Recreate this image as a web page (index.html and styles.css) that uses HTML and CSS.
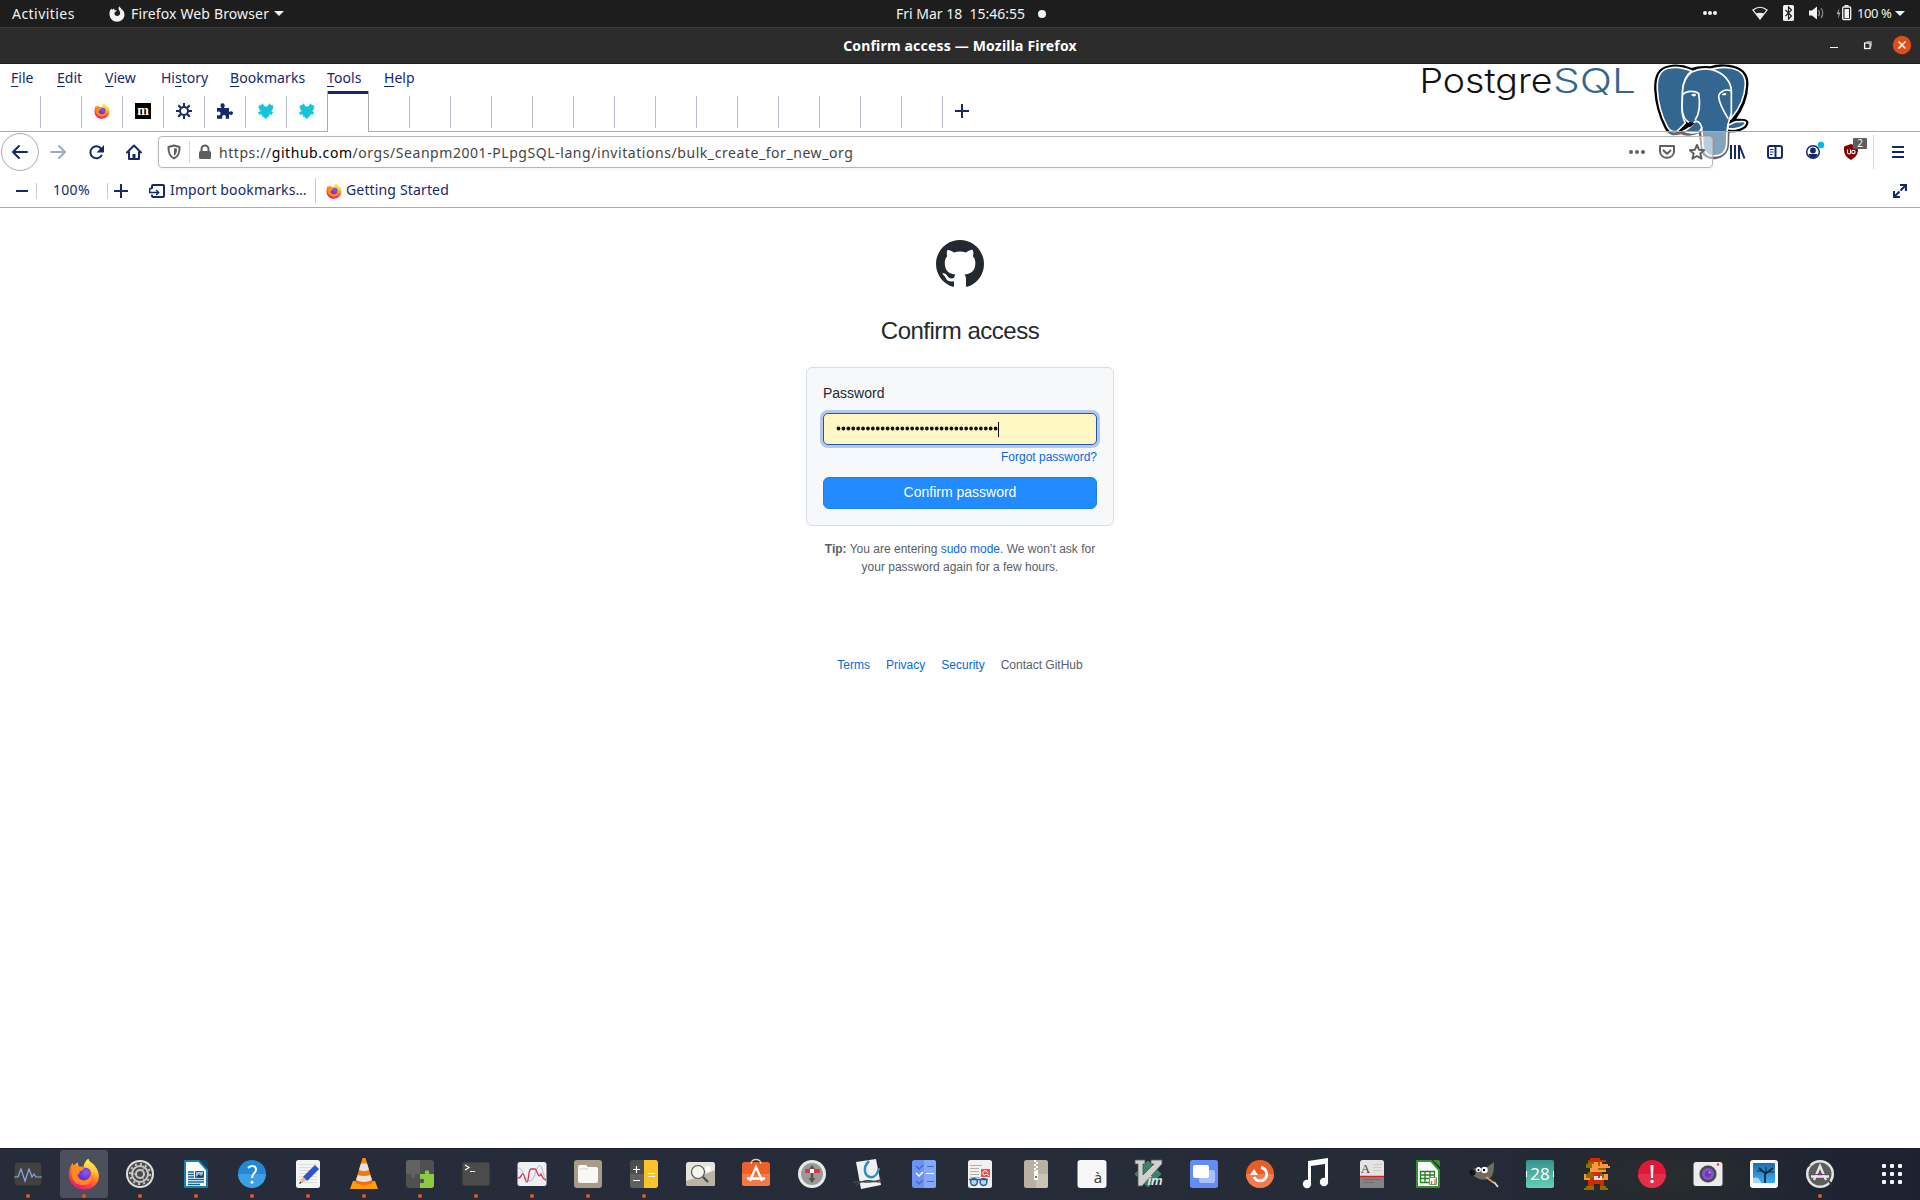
FILE: index.html
```html
<!DOCTYPE html>
<html lang="en">
<head>
<meta charset="utf-8">
<title>Confirm access — Mozilla Firefox</title>
<link rel="stylesheet" href="styles.css">
</head>
<body>
<svg class="defs" width="0" height="0">
  <defs>
    <linearGradient id="ffBody" x1="0.85" y1="0" x2="0.3" y2="1"><stop offset="0" stop-color="#fff44f"/><stop offset=".3" stop-color="#ffbd2e"/><stop offset=".58" stop-color="#ff6a2a"/><stop offset=".85" stop-color="#ff2c5e"/><stop offset="1" stop-color="#e31587"/></linearGradient>
    <radialGradient id="ffGlobe" cx=".6" cy=".4" r=".6"><stop offset="0" stop-color="#9059ff"/><stop offset="1" stop-color="#5b2fc4"/></radialGradient>
    <linearGradient id="ffTail" x1="0" y1="0" x2="0" y2="1"><stop offset="0" stop-color="#fff655"/><stop offset="1" stop-color="#ffa52a"/></linearGradient>
    <linearGradient id="blueQ" x1="0" y1="0" x2="0" y2="1"><stop offset=".5" stop-color="#2187d8"/><stop offset=".5" stop-color="#3f9fe4"/></linearGradient>
    <linearGradient id="cone" x1="0" y1="0" x2="0" y2="1"><stop offset="0" stop-color="#ff8a0c"/><stop offset="1" stop-color="#f36b00"/></linearGradient>
    <linearGradient id="teal" x1="0" y1="0" x2="0" y2="1"><stop offset="0" stop-color="#35938f"/><stop offset="1" stop-color="#63d1b5"/></linearGradient>
    <linearGradient id="tree" x1="0" y1="0" x2="0" y2="1"><stop offset="0" stop-color="#1c6cb0"/><stop offset="1" stop-color="#3daef0"/></linearGradient>
    <symbol id="firefox" viewBox="0 0 32 32">
      <path fill="url(#ffBody)" d="M1.500 12C2 8.500 3.300 6.500 4.900 5c.1 1.300.4 2.100.9 2.800C6.700 6.500 8.300 5 10 4.500c-.3 1.600.4 3.400 1.600 4.200l4-.3C16.500 5 18 2.400 20.300.7c.4 2.300 1.700 3.900 4 6 1.300 1.200 2.200 2.700 2.800 4.300.3-.8.4-1.500.3-2.300 2.600 3.300 4 7 3.500 11C30 26.600 23.700 31.500 16 31.500 7.500 31.500 1 25.200 1 17.300c0-2 .1-3.800.5-5.300z"/>
      <circle cx="16.500" cy="15.800" r="6.600" fill="url(#ffGlobe)"/>
      <path fill="#ff8a1e" d="M4 8.500c2-.9 5-.8 7 .3 1.500.9 3.500 1 5 1.200-.2 1.800-1.800 2.400-3.500 3-1.400.7-1.400 2-1 3-2.500-.3-3.400 2-1.500 4 2.700 2.900 7 3.300 10 1 2.700-2 3.300-5 2.500-8 3 4.500 2.200 10.500-3 13-6.500 3-13.500-.5-15.500-7-1-3.600-.9-7.500 0-10.500z"/>
      <path fill="url(#ffTail)" d="M20.300.7c-3.300 2.400-4.700 6-4.300 9 4.700-.8 8.700 2.300 8.400 8 1.500-1 2.200-2.700 2.200-4.500 1 2.300 1.200 5 .5 7.300 3.500-5 2.300-11.500-2.800-15.300-2.400-1.500-3.500-2.700-4-4.500z"/>
    </symbol>
    <symbol id="fox" viewBox="0 0 16 16"><path fill="#15c4d8" d="M0 4l1.500-.5L1 1.800l2 .4 1.500-2L6 2.800l1 .7h2l1-.7L11.500.2l1.500 2 2-.4-.5 1.700L16 4l-1.500 1.500.3 1.500-1.800 1 2.500 1.500-1.500.7.3 1.800-2.500-.8-1 .8.5 1.500-1.800.2L8.600 15.700H7.400L5.500 13.700l-1.800-.2.500-1.500-1-.8-2.500.8.3-1.800L-.5 9.500 3 8 1.200 7l.3-1.500z"/></symbol>
  </defs>
</svg>

<header class="topbar">
  <span class="ubuntu activities">Activities</span>
  <svg class="top-ff" width="16" height="16" viewBox="0 0 16 16"><path fill="#f2f2f2" d="M.5 8C.5 5 1.300 3.500 2.500 2.400L3 3.700 5 2.500 5.500 4 8 4.500 6.200 6C5 6.500 5 9.500 8 10c3 0 4-3 2.500-5C9.500 3.500 9 2 10.300.3 11 2.500 15.500 4 15.500 8.500 15.500 13 12 15.700 8 15.700S.5 12.500.5 8z"/></svg>
  <span class="ubuntu appname">Firefox Web Browser</span>
  <i class="caret"></i>
  <span class="ubuntu clock">Fri Mar 18&nbsp; 15:46:55</span><i class="dot"></i>
  <svg class="tray" width="280" height="27" viewBox="0 0 280 27">
    <g fill="#f2f2f2"><circle cx="65" cy="13" r="2"/><circle cx="70" cy="13" r="2"/><circle cx="75" cy="13" r="2"/>
    <path d="M116 13.500q4-1.500 8 0l-4 6z"/><path fill="none" stroke="#f2f2f2" stroke-width="1.200" d="M113 10q7-5.500 14 0l-7 9z"/>
    <rect x="143" y="5" width="11" height="16" rx="1.500"/><path fill="none" stroke="#222" stroke-width="1.200" d="M145.500 10l6 6-3 3V7l3 3-6 6"/>
    <path d="M169 10.500h3l5-4v13l-5-4h-3z"/><path fill="none" stroke="#888" stroke-width="1.300" d="M178.500 10q2 3 0 6M181 8q3.500 5 0 10"/>
    <path fill="#aaa" d="M199.500 8l-3 6h2l-.5 5 2.500-6.500h-1.800z"/><path d="M204.500 5h4v1.500h-4z"/><rect x="202.700" y="7" width="8" height="12.500" rx="1" fill="none" stroke="#f2f2f2" stroke-width="1.300"/><rect x="204.500" y="9" width="4.500" height="9"/>
    <path d="M255 11h10l-5 5z"/></g>
  </svg>
  <span class="ubuntu battery">100 %</span>
</header>

<div class="titlebar">
  <span class="ubuntu wintitle">Confirm access — Mozilla Firefox</span>
  <svg class="controls" width="100" height="35" viewBox="0 0 100 35"><path stroke="#fff" d="M10 19.500h8"/><path fill="none" stroke="#999" d="M46.500 13.500h5v5"/><rect x="44.600" y="15" width="5.500" height="5.500" fill="none" stroke="#fff" stroke-width="1.300"/><circle cx="82" cy="17" r="9.200" fill="#e04d18"/><path stroke="#fff" stroke-width="1.600" d="M78.500 13.500l7 7m0-7l-7 7"/></svg>
</div>

<div class="toolbox">
  <svg class="elephant" width="340" height="120" viewBox="0 192 1020 360">
    <g transform="translate(660 0)" stroke-linejoin="round" stroke-linecap="round">
      <path fill="#000" stroke="#000" stroke-width="5" d="M155 206C135 198 108 194 88 198 55 203 43 230 45 270 47 310 60 352 76 384 88 408 104 404 122 400 140 408 165 404 178 396L186 452C192 472 208 476 225 475 252 472 264 456 265 430L266 396C292 396 324 386 323 366 318 354 298 360 284 359 306 330 322 292 323 252 323 218 302 202 268 197 245 194 222 197 212 201 190 199 172 200 155 206z"/>
      <path fill="#336791" stroke="#fff" stroke-width="5" d="M155 213C130 203 105 200 88 204 60 208 50 235 52 270 54 308 66 350 82 380 88 392 98 398 112 393L136 369C128 355 126 338 126 320L128 270C130 245 138 226 155 213z"/>
      <path fill="#336791" stroke="#fff" stroke-width="5" d="M212 208C235 202 255 201 270 204 298 208 316 224 316 252 315 290 300 325 272 357L274 270C268 240 245 218 212 208z"/>
      <path fill="#336791" stroke="#fff" stroke-width="5" d="M155 216C175 207 198 205 215 209 250 217 274 245 274 275L274 340C268 358 262 375 261 396L260 435C257 460 242 468 222 468 202 469 193 460 189 440L185 382 150 370C132 360 126 342 126 320L128 270C130 245 139 228 155 216z"/>
      <path fill="#336791" stroke="#fff" stroke-width="5" d="M130 393C145 390 155 375 165 365 175 362 182 370 185 382 182 402 152 402 130 393zM264 374C273 376 280 365 290 365 300 366 312 362 316 367 315 382 285 390 264 386z"/>
      <path fill="#000" d="M132 383l16-18 17 4-14 12z"/>
      <path fill="none" stroke="#fff" stroke-width="5" d="M129 283C140 271 166 272 176 280 180 305 182 335 166 359M272 272C255 266 236 276 236 290 238 314 252 336 264 355"/>
      <path fill="#fff" d="M153 285q9-7 16-1-5 10-16 1zM245 284q5-8 15-3-3 9-15 3z"/>
    </g>
    <g class="brand" transform="scale(3)"><text x="-.5" y="93" font-size="33.500" textLength="133" lengthAdjust="spacingAndGlyphs" fill="#111">Postgre</text><text x="133" y="93" font-size="33.500" textLength="83" lengthAdjust="spacingAndGlyphs" fill="#336791">SQL</text></g>
  </svg>
  <nav class="menubar ubuntu">
    <span class="m-file"><u>F</u>ile</span><span class="m-edit"><u>E</u>dit</span><span class="m-view"><u>V</u>iew</span><span class="m-hist">Hi<u>s</u>tory</span><span class="m-book"><u>B</u>ookmarks</span><span class="m-tool"><u>T</u>ools</span><span class="m-help"><u>H</u>elp</span>
  </nav>
  <div class="tabs">
    <div class="tab"></div><div class="tab"></div>
    <div class="tab"><svg width="16" height="16"><use href="#firefox"/></svg></div>
    <div class="tab"><svg width="16" height="16" viewBox="0 0 16 16"><rect width="16" height="16" fill="#000"/><text class="slab" x="8" y="11.500" text-anchor="middle" font-size="14" fill="#fff">m</text></svg></div>
    <div class="tab"><svg width="16" height="16" viewBox="0 0 16 16"><circle cx="8" cy="8" r="4" fill="none" stroke="#14296b" stroke-width="2"/><path stroke="#14296b" stroke-width="2" d="M8 0v3.500M8 12.500V16M0 8h3.500M12.500 8H16M2.300 2.300l2.500 2.500M11.200 11.200l2.500 2.500M2.300 13.700l2.500-2.500M11.200 4.800l2.500-2.500"/></svg></div>
    <div class="tab"><svg width="16" height="16" viewBox="0 0 16 16"><path fill="#14296b" d="M0 5h4.500C2.700 2.500 3.500.3 5.500.3S8.500 2.500 7 5h5v4c2-1.500 4-.8 4 1s-2 2.700-4 1v4.700H8.500c1-2.500 0-3.700-1.500-3.700s-2.500 1.200-1.500 3.700H0V12c2.500 1 3.500 0 3.500-1.500S2.500 8 0 9z"/></svg></div>
    <div class="tab"><svg width="16" height="16"><use href="#fox"/></svg></div>
    <div class="tab last"><svg width="16" height="16"><use href="#fox"/></svg></div>
    <div class="tab active"></div>
    <div class="tab"></div><div class="tab"></div><div class="tab"></div><div class="tab"></div><div class="tab"></div><div class="tab"></div><div class="tab"></div><div class="tab"></div><div class="tab"></div><div class="tab"></div><div class="tab"></div><div class="tab"></div><div class="tab"></div><div class="tab"></div>
    <div class="newtab"><svg width="16" height="16" viewBox="0 0 16 16"><path stroke="#14296b" stroke-width="2" d="M8 1v14M1 8h14"/></svg></div>
  </div>
  <div class="nav">
    <svg class="navleft" width="158" height="40" viewBox="0 0 158 40" fill="none" stroke="#14296b" stroke-width="2" stroke-linecap="round" stroke-linejoin="round">
      <circle cx="20" cy="20" r="18.500" fill="#fff" stroke="#aaa" stroke-width="1"/><path d="M27 20H13m6-6l-6 6 6 6"/>
      <path stroke="#a1a9c4" d="M51 20h14m-6-6l6 6-6 6"/>
      <path d="M101.500 23.500a6 6 0 1 1-.5-7"/><path fill="#14296b" stroke="none" d="M104 13v7.500h-7.500z"/>
      <path d="M127 20.500l7-7 7 7M129 20v7h10v-7"/><path stroke-width="3" d="M134 22v4" stroke-linecap="butt"/>
    </svg>
    <div class="urlbar">
      <svg width="60" height="30" viewBox="0 0 60 30"><path fill="none" stroke="#5f5f61" stroke-width="2" stroke-linejoin="round" d="M9.500 10l5.500-1.500 5.500 1.500c.2 6-1 9-5.500 11.500-4.500-2.500-5.700-5.500-5.500-11.500z"/><path fill="#5f5f61" d="M15 11l3 .8c0 4-.8 5.500-3 7z"/><path stroke="#d5d5d8" d="M30.500 4v22"/><path fill="#5f5f61" d="M40 15.500q0-1.500 1.500-1.500h9q1.500 0 1.500 1.500v5q0 1.500-1.500 1.500h-9q-1.500 0-1.500-1.500z"/><path fill="none" stroke="#5f5f61" stroke-width="2" d="M42.500 14.500v-2.500a3.500 3.500 0 0 1 7 0v2.500"/></svg>
      <span class="ubuntu url">https://<b>github.com</b>/orgs/Seanpm2001-PLpgSQL-lang/invitations/bulk_create_for_new_org</span>
      <svg class="urlicons" width="90" height="30" viewBox="0 0 90 30"><g fill="#5f5f61"><circle cx="8" cy="15" r="2"/><circle cx="14" cy="15" r="2"/><circle cx="20" cy="15" r="2"/></g><g fill="none" stroke="#5f5f61" stroke-width="2" stroke-linejoin="round" stroke-linecap="round"><path d="M37 9h14v5c0 9-14 9-14 0z"/><path d="M40.500 13.500l3.500 3.300 3.500-3.300"/><path d="M74 8l2.100 4.700 5.100.5-3.900 3.400 1.200 5-4.500-2.600-4.500 2.600 1.200-5-3.900-3.400 5.100-.5z"/></g></svg>
    </div>
    <svg class="navright" width="206" height="40" viewBox="1714 132 206 40" fill="none" stroke="#14296b" stroke-width="2">
      <path d="M1731 145v14M1735 145v14M1739 145v14M1739.500 145.500l5 13"/>
      <rect x="1768" y="146" width="14" height="12" rx="2"/><path d="M1775.500 146v12"/><path stroke-width="1" d="M1770 149.500h3.500M1770 152h3.500M1770 154.500h2.500"/>
      <circle cx="1813" cy="152" r="6.300" stroke-width="1.500"/><circle cx="1813" cy="150.500" r="2.900" fill="#14296b" stroke="none"/><path stroke="none" fill="#14296b" d="M1808.500 154h9q-1 4-4.500 4t-4.500-4z"/><circle cx="1821" cy="145" r="3.200" fill="#00b3f4" stroke="none"/>
      <path fill="#800000" stroke="none" d="M1851 144l7 2.500c.5 7-1.500 10.500-7 13.500-5.500-3-7.500-6.500-7-13.500z"/><path stroke="#fff" stroke-width="1.100" d="M1847.500 149.500v3.500q1.700 2 3 0v-3.500"/><circle cx="1853.400" cy="152" r="1.700" stroke="#fff" stroke-width="1.100"/>
      <rect x="1853" y="138" width="14" height="11" rx="1" fill="#5d5d5f" stroke="none"/><text class="badge" x="1860" y="147" text-anchor="middle" font-size="10" fill="#fff" stroke="none">2</text>
      <path stroke="#d3d3db" stroke-width="1" d="M1873.500 135v34"/><path d="M1892 147h12M1892 152h12M1892 157h12"/>
    </svg>
  </div>
  <div class="bookmarks ubuntu">
    <svg width="53" height="36" viewBox="0 171 53 36" fill="none"><path stroke="#14296b" stroke-width="2" d="M16 190h12"/><path stroke="#ccc" d="M36.500 182v16"/></svg>
    <span class="zoomlevel">100%</span>
    <svg width="79" height="36" viewBox="91 171 79 36" fill="none"><path stroke="#ccc" d="M107.500 182v16"/><path stroke="#14296b" stroke-width="2" d="M114 190h14M121 183v14"/><path stroke="#14296b" stroke-width="2" stroke-linecap="round" stroke-linejoin="round" d="M152 187v-2q0-1 1-1h10q1 0 1 1v10q0 1-1 1h-10q-1 0-1-1v-.5"/><path stroke="#14296b" stroke-width="1.400" d="M152 187.500h-2.300v4h9m-2.500-2.500l2.500 2.500-2.500 2.500"/></svg>
    <span class="import">Import bookmarks…</span>
    <svg width="40" height="36" viewBox="306 171 40 36"><path stroke="#ccc" d="M315.500 177v25"/><use href="#firefox" x="326" y="182" width="16" height="16"/></svg>
    <span class="started">Getting Started</span>
    <svg class="expand" width="40" height="36" viewBox="1880 171 40 36" fill="none" stroke="#14296b" stroke-width="2"><path d="M1900 184h6v6M1894 190v6h6M1905.500 184.500l-5 5M1894.500 195.500l5-5"/></svg>
  </div>
</div>

<main class="page">
  <svg class="mark" width="48" height="48" viewBox="0 0 16 16"><path fill="#24292f" fill-rule="evenodd" d="M8 0C3.580 0 0 3.580 0 8c0 3.540 2.290 6.530 5.470 7.590.4.070.55-.17.55-.38 0-.19-.01-.82-.01-1.490-2.010.37-2.530-.49-2.690-.94-.09-.23-.48-.94-.82-1.130-.28-.15-.68-.52-.01-.53.63-.01 1.080.58 1.230.82.72 1.210 1.870.87 2.330.66.07-.52.28-.87.51-1.070-1.780-.2-3.640-.89-3.640-3.950 0-.87.31-1.590.82-2.150-.08-.2-.36-1.020.08-2.120 0 0 .67-.21 2.200.82.64-.18 1.320-.27 2-.27s1.360.09 2 .27c1.530-1.040 2.200-.82 2.200-.82.44 1.100.16 1.920.08 2.120.51.56.82 1.270.82 2.150 0 3.070-1.870 3.750-3.650 3.950.29.25.54.73.54 1.480 0 1.070-.01 1.930-.01 2.200 0 .21.15.46.55.38A8.010 8.010 0 0 0 16 8c0-4.420-3.580-8-8-8z"/></svg>
  <h1>Confirm access</h1>
  <form class="card">
    <label>Password</label>
    <div class="input"><svg width="170" height="20" viewBox="0 0 170 20"><path fill="none" stroke="#111" stroke-width="3.800" stroke-linecap="round" stroke-dasharray="0 4.910" d="M4.500 9.500h158"/><path stroke="#000" d="M164.500 3v15"/></svg></div>
    <a class="forgot">Forgot password?</a>
    <div class="button">Confirm password</div>
  </form>
  <p class="tip"><b>Tip:</b> You are entering <a>sudo mode</a>. We won’t ask for<br>your password again for a few hours.</p>
  <footer class="links"><a>Terms</a><a>Privacy</a><a>Security</a><span>Contact GitHub</span></footer>
</main>

<div class="dock">
  <svg class="app run" viewBox="-28 -26 56 52"><rect x="-14" y="-12" width="28" height="24" rx="2.500" fill="#414141" stroke="#262626"/><path fill="none" stroke="#8faae8" stroke-width="1.200" d="M-14 3h4l3-8 4 12 4-12 3 8 2-3 2 3h6"/><circle class="pip" cy="22" r="2"/></svg>
  <svg class="app run" viewBox="-28 -26 56 52"><rect x="-24" y="-24" width="48" height="48" rx="3" fill="#4b505a"/><use href="#firefox" x="-16" y="-16" width="32" height="32"/><circle class="pip" cy="22" r="2"/></svg>
  <svg class="app run" viewBox="-28 -26 56 52"><circle r="14" fill="#e0dfdc"/><circle r="12" fill="#4a4a4a"/><circle r="8" fill="none" stroke="#c8c8c6" stroke-width="2"/><circle r="10" fill="none" stroke="#c8c8c6" stroke-width="2" stroke-dasharray="2 3.200"/><circle r="4" fill="none" stroke="#c8c8c6" stroke-width="2"/><path stroke="#c8c8c6" d="M-8 0h4M2-3l3-4M2 3l3 4"/><circle class="pip" cy="22" r="2"/></svg>
  <svg class="app run" viewBox="-28 -26 56 52"><path fill="#fff" stroke="#1d7ea8" stroke-width="2" stroke-linejoin="round" d="M-11-13H3l8 9v17h-22z"/><path fill="#0f405b" d="M3-14h9v9z"/><path stroke="#12639a" stroke-width="1.300" d="M-8-2h6M-8 .5h6M-8 3h6M-8 5.500H8M-8 8H8M-8 10.500H4"/><path fill="#8cc8ee" stroke="#12639a" d="M-.5-2.500h8v6h-8z"/><path fill="#124563" d="M0 3l3-3 2 2 2-2v3z"/><circle class="pip" cy="22" r="2"/></svg>
  <svg class="app run" viewBox="-28 -26 56 52"><circle r="14" fill="url(#blueQ)"/><path fill="none" stroke="#fff" stroke-width="2" d="M-4-6c3-3 8-2.500 8 1.500C4-1 0-.5 0 4"/><circle cy="8.200" r="1.500" fill="#fff"/><circle class="pip" cy="22" r="2"/></svg>
  <svg class="app run" viewBox="-28 -26 56 52"><rect x="-12" y="-14" width="24" height="28" rx="2.500" fill="#f5f5f5"/><path stroke="#ddd" d="M-9-9.500H9M-9-6.500H9M-9-3.500H9M-9-.5H9M-9 2.500H9M-9 5.500H9M-9 8.500H9"/><path stroke="#2d55cc" stroke-width="6" d="M9-7l-12 12"/><path fill="#e7b88c" d="M-5 2.500L-9 10l7.500-3.500z"/><path fill="#222" d="M-7.500 7.500L-9 10l2.500-1z"/><circle class="pip" cy="22" r="2"/></svg>
  <svg class="app run" viewBox="-28 -26 56 52"><path fill="#ff9d0a" d="M-11 7h22l3 8h-28z"/><path fill="url(#cone)" d="M-1.500-16h3L9 9Q0 13-9 9z"/><path fill="#e4e4e4" d="M-3-10.500h6l2 6.500q-5 2-10 0zM-6.200 1q6 2 12.400 0L8 6q-8 4-16 0z"/><circle class="pip" cy="22" r="2"/></svg>
  <svg class="app run" viewBox="-28 -26 56 52"><rect x="-14" y="-14" width="28" height="28" rx="3" fill="#505050"/><path fill="#626262" d="M-11-14H0V0h-14v-11q0-3 3-3z"/><path fill="#8ccb42" d="M0 0h14v11q0 3-3 3H0V8.500h3v-3H0z"/><circle cx="7" cy="-1.500" r="2.200" fill="#8ccb42"/><circle cx="-7" cy="1.500" r="2.200" fill="#626262"/><circle cx="2" cy="7" r="2.200" fill="#505050"/><circle class="pip" cy="22" r="2"/></svg>
  <svg class="app run" viewBox="-28 -26 56 52"><rect x="-14" y="-12" width="28" height="24" rx="2.500" fill="#4b4b4b" stroke="#303030"/><path fill="none" stroke="#fff" stroke-width="1.200" d="M-11-9l4 2.500-4 2.500M-6-2.500h5"/><circle class="pip" cy="22" r="2"/></svg>
  <svg class="app run" viewBox="-28 -26 56 52"><rect x="-14.500" y="-12" width="29" height="24" rx="2.500" fill="#f0f0f0"/><path fill="none" stroke="#8fbfe6" d="M-14-6c5-1 6 13 12 13C3 7 3-6 7-8s4 12 7 13"/><path fill="none" stroke="#e03050" stroke-width="1.300" d="M-14 4c4 0 3-5 5-4s2 8 4 8S-4-5-1-5h4c2 0 3 11 6 5 2 5 3 6 5 6"/><circle class="pip" cy="22" r="2"/></svg>
  <svg class="app run" viewBox="-28 -26 56 52"><rect x="-14" y="-14" width="28" height="28" rx="3" fill="#a79c89"/><path fill="#f9f8f5" d="M-10-7q0-2 2-2h6l2 2h8q2 0 2 2V7q0 2-2 2H-8q-2 0-2-2z"/><path stroke="#d9d2c4" d="M-9-5H0"/><circle class="pip" cy="22" r="2"/></svg>
  <svg class="app run" viewBox="-28 -26 56 52"><rect x="-14" y="-14" width="28" height="28" rx="3" fill="#4c4c4c"/><path fill="#606060" d="M-14 0H0v14h-11q-3 0-3-3z"/><path fill="#fcc22b" d="M0-14h11q3 0 3 3v22q0 3-3 3H0z"/><path stroke="#fff" stroke-width="1.200" d="M-11-4.500h7M-7.500-8v7M-11 6.500h7M4-.5h7M4 2.500h7"/><circle class="pip" cy="22" r="2"/></svg>
  <svg class="app" viewBox="-28 -26 56 52"><rect x="-14" y="-12" width="29" height="24" rx="2.500" fill="#e6e5dc"/><path fill="#bab5a3" d="M-14 7L1 2l14-6v14q0 2-2 2h-25q-2 0-2-2z"/><circle cx="8" cy="-5" r="3" fill="#fff"/><circle cx="-2" cy="-2" r="6.500" fill="#f4f4f1" stroke="#555" stroke-width="1.200"/><path stroke="#444" stroke-width="2" d="M3 3l5 5"/></svg>
  <svg class="app" viewBox="-28 -26 56 52"><rect x="-14" y="-12" width="28" height="24" rx="2.500" fill="#ef6028"/><path fill="#f37a49" d="M-14 0h28v9.500q0 2.500-2.500 2.500h-23q-2.500 0-2.500-2.500z"/><path fill="none" stroke="#e8cfa4" stroke-width="1.500" d="M-5-10c0-6 10-6 10 0"/><path fill="none" stroke="#fff" stroke-width="2.300" d="M-6 7L0-7 6 7M-9 4.500H9"/></svg>
  <svg class="app" viewBox="-28 -26 56 52"><circle r="14" fill="#e8e8e6"/><circle r="11" fill="#999b98"/><path stroke="#555" stroke-width="2.500" d="M0-6V7"/><path fill="#555" d="M-3-5l3-4 3 4zM-3.500 4h7L0 9z"/><rect x="-7" y="-5" width="15" height="4" rx="1" fill="#df3440"/><rect x="-2" y="-5" width="4" height="4" fill="#fff"/></svg>
  <svg class="app" viewBox="-28 -26 56 52"><path fill="#f1f1f1" d="M-12-12l20-3 5 26-20 4z"/><path fill="none" stroke="#2b8fc4" stroke-width="2.500" d="M1-13C-6-6-3 2 2 3s8-4 9-9"/><path fill="none" stroke="#444" stroke-width="1.300" d="M-15 9C-8 5 0 12 14 5M-12 12C-4 3 5 8 13 8"/></svg>
  <svg class="app" viewBox="-28 -26 56 52"><rect x="-12" y="-14" width="24" height="28" rx="2.500" fill="#6d93f5"/><path fill="#86a8f8" d="M0-14h9.500q2.500 0 2.500 2.500v23q0 2.500-2.500 2.500H0z"/><path stroke="#456ac7" d="M3-7.500h7M3 7.500h7"/><path stroke="#fff" d="M2-.5h8"/><path fill="none" stroke="#456ac7" stroke-width="1.400" d="M-8-8l3 3 4-4M-8 7l3 3 4-4"/><path fill="none" stroke="#fff" stroke-width="1.500" d="M-8-1l3 3 4-4"/></svg>
  <svg class="app" viewBox="-28 -26 56 52"><rect x="-12" y="-14" width="24" height="28" rx="2.500" fill="#f1f0ee"/><path stroke="#b5b1a8" d="M-10-8.500H2M-10-5.500h9M-10-2.500h9M-10 .5h9M-10 3.500H0"/><rect x="1" y="-5" width="9" height="8" fill="#e65352"/><path fill="none" stroke="#fff" d="M8-1c-2-4-6-2-5 1s4-2 6 2"/><g fill="#b6d9ee" stroke="#265f9c" stroke-width="1.500"><circle cx="-6" cy="8" r="3.400"/><circle cx="3.500" cy="8" r="3.400"/><path d="M-11 5.500H8"/></g></svg>
  <svg class="app" viewBox="-28 -26 56 52"><rect x="-12" y="-14" width="24" height="28" rx="2.500" fill="#b9b2a2"/><path fill="#c8c3b6" d="M0 0h12v11.500q0 2.500-2.500 2.500H0z"/><path stroke="#fff" stroke-width="2" stroke-dasharray="2 2" d="M-1-14V0M1-12V0"/><rect x="-2" y="-3" width="4" height="9" fill="#fff"/><path fill="#777" d="M-1 2h2v2h-2z"/></svg>
  <svg class="app" viewBox="-28 -26 56 52"><rect x="-14.500" y="-14" width="29" height="28" rx="3" fill="#f6f6f6"/><text class="glyph" x="6" y="9" font-size="15" text-anchor="middle" fill="#444">à</text></svg>
  <svg class="app" viewBox="-28 -26 56 52"><path fill="#3c8168" stroke="#173d31" d="M0-14L14 0 0 14-14 0z"/><path fill="#d0d0d0" stroke="#555" stroke-width=".8" d="M-13-14h10v4h-2V1L6-10H3v-4h11v4L-6 12h-4v-22h-3z"/><text class="vim" x="7" y="11" font-size="13" text-anchor="middle" fill="#e4e4e4">im</text></svg>
  <svg class="app" viewBox="-28 -26 56 52"><rect x="-14" y="-14" width="28" height="28" rx="2.500" fill="#658cf5"/><rect x="-5" y="-4" width="16" height="13" rx="2" fill="#a8c0fb"/><rect x="-11" y="-9" width="16" height="13" rx="2" fill="#fff"/></svg>
  <svg class="app" viewBox="-28 -26 56 52"><circle r="14" fill="#eb5b25"/><path fill="#f27c50" d="M-14 0a14 14 0 0 0 28 0z"/><path fill="none" stroke="#fff" stroke-width="2.800" d="M1-6.500A6.700 6.700 0 1 1-6 3"/><path fill="#fff" d="M-10 1h8l-4-6z"/></svg>
  <svg class="app" viewBox="-28 -26 56 52"><path fill="#fff" d="M-8-13l20-3v24h-3V-10l-14 2v18h-3z"/><circle cx="-9" cy="10" r="4.200" fill="#fff"/><circle cx="8" cy="8" r="4.200" fill="#fff"/></svg>
  <svg class="app" viewBox="-28 -26 56 52"><rect x="-12" y="-14" width="24" height="28" rx="2.500" fill="#e5e3e2"/><path fill="#858585" d="M-12 2h24v9.500q0 2.500-2.500 2.500h-19q-2.500 0-2.500-2.500z"/><path stroke="#e71818" stroke-width="1.500" d="M-12 2.500h24"/><path stroke="#ccc" d="M1-9.500h9M1-6.500h9M1-3.500h9"/><path stroke="#6d6d6d" d="M-9 5.500H9M-9 8.500H2"/><text class="serif" x="-6.500" y="-1" font-size="13" text-anchor="middle" fill="#444">A</text></svg>
  <svg class="app" viewBox="-28 -26 56 52"><path fill="#fff" stroke="#30952a" stroke-width="2" stroke-linejoin="round" d="M-11-13H3l8 9v17h-22z"/><path fill="#30952a" d="M5-14h5q2 0 2 2v5z"/><path fill="none" stroke="#277c25" stroke-width="1.300" d="M-7.500-2.500h14v11h-14zM-7.500 1h14M-7.500 4.500h14M-3-2.500v11M2-2.500v11"/><path fill="#fff" stroke="#888" d="M1.500 3.500h7v7h-7z"/><path stroke="#df6628" stroke-width="1.300" d="M3.500 10V7M7 10V5"/></svg>
  <svg class="app" viewBox="-28 -26 56 52"><path fill="#716a60" d="M-12-4C-7-8-2-5 2-6l8-6c0 8 0 15-6 17-7 2-12-1-16-5z"/><circle cx="-11.500" cy="-1.500" r="3" fill="#111"/><circle cx="-5.500" cy="-4.500" r="2.500" fill="#fff"/><circle cx=".5" cy="-4" r="3.200" fill="#fff"/><circle cx="-5.500" cy="-4" r="1"/><circle cx="0" cy="-4" r="1.200"/><path stroke="#d99b5b" stroke-width="1.800" d="M2 3l8 6"/><path stroke="#ddd" stroke-width="1.800" d="M10 8l4 5"/></svg>
  <svg class="app" viewBox="-28 -26 56 52"><rect x="-14" y="-14" width="28" height="28" rx="2" fill="url(#teal)"/><path fill="#fff" d="M-14-3h1v6h-1zM13-3h1v6h-1z"/><text class="glyph" x="0" y="6.300" font-size="17" text-anchor="middle" fill="#fff">28</text></svg>
  <svg class="app" viewBox="-28 -26 56 52" shape-rendering="crispEdges"><g transform="translate(-12 -16) scale(2)"><path fill="#d82800" d="M3 0h5v1h3v1H2V1h1zM3 7h6v3h1v2H2v-2h1z"/><path fill="#fc9838" d="M3 2h6v1h3v1h1v1h-2v2H3V5H2V3h1zM0 8h3v3H0zM9 8h3v3H9z"/><path fill="#887000" d="M2 2h3v1H4v2H1V3h1zM7 2h1v2H7zM7 5h4v1H7zM2 7h2v1h1v2H1V8h1zM8 8h2v2H8zM1 14h4v2H0v-1h1zM8 14h3v1h1v1H8z"/><path fill="#d82800" d="M2 11h3v3H2zM5 11h3v2H5zM8 11h2v3H8z"/><path fill="#ddd" d="M5 9h4v2H5z"/><path fill="#445fcf" d="M7 9h1v1H7z"/></g></svg>
  <svg class="app" viewBox="-28 -26 56 52"><circle r="14" fill="#dd1838"/><path fill="#e52e4b" d="M-14 0a14 14 0 0 0 28 0z"/><path fill="#fff" d="M-1.500-9h3L1 4h-2z"/><circle cy="7.500" r="1.700" fill="#fff"/></svg>
  <svg class="app" viewBox="-28 -26 56 52"><rect x="-14.500" y="-12" width="29" height="24" rx="2.500" fill="#ececec"/><circle r="9.500" fill="#ddd"/><circle r="8.500" fill="#4b4757"/><circle r="6" fill="#8653cd"/><circle r="3" fill="#6a37ae"/><circle cx="1.500" cy="-1.500" r="1" fill="#ccaef3"/><circle cx="10" cy="-9.500" r="1.200" fill="#e53935"/></svg>
  <svg class="app" viewBox="-28 -26 56 52"><rect x="-14" y="-14" width="28" height="28" rx="3" fill="#fafafa"/><rect x="-11" y="-11" width="22" height="20" rx="1" fill="url(#tree)"/><path fill="#a8d9ef" d="M-11 9V4q6-2 8 5z"/><path fill="none" stroke="#12283c" stroke-width="1.800" d="M1 9V-1l-6-5M1 0l8-6"/><path fill="none" stroke="#12283c" d="M2-1V-7M-1-3h-6M4-2h6"/></svg>
  <svg class="app run" viewBox="-28 -26 56 52"><circle r="14" fill="#e4e4e4"/><circle r="11.500" fill="#5d5d5d"/><path fill="none" stroke="#e8e8e8" stroke-width="2.300" d="M-6 6L0-8 6 6M-9 2.500H9"/><path stroke="#6e3770" d="M-6 .5H6"/><path stroke="#333" stroke-width="1.500" d="M-13-7l3-2M9 7l3 5"/><circle class="pip" cy="22" r="2"/></svg>
  <svg class="app grid" viewBox="-28 -26 56 52"><g fill="#f4f4f4"><rect x="-10" y="-10" width="4" height="4" rx="1"/><rect x="-2" y="-10" width="4" height="4" rx="1"/><rect x="6" y="-10" width="4" height="4" rx="1"/><rect x="-10" y="-2" width="4" height="4" rx="1"/><rect x="-2" y="-2" width="4" height="4" rx="1"/><rect x="6" y="-2" width="4" height="4" rx="1"/><rect x="-10" y="6" width="4" height="4" rx="1"/><rect x="-2" y="6" width="4" height="4" rx="1"/><rect x="6" y="6" width="4" height="4" rx="1"/></g></svg>
</div>
</body>
</html>
```
FILE: styles.css
```css
* { box-sizing: border-box; }
body { margin: 0; width: 1920px; height: 1200px; overflow: hidden; display: flex; flex-direction: column; background: #fff; font-family: "Liberation Sans", Arial, sans-serif; }
svg { display: block; flex: none; }
.defs { position: absolute; }
.ubuntu { font-family: "Noto Sans", "Open Sans", sans-serif; font-size: 14px; white-space: nowrap; }

.topbar { height: 28px; flex: none; display: flex; align-items: center; background: #1d1d1d; border-bottom: 1px solid #3c3c3c; color: #f2f2f2; position: relative; padding-left: 12px; }
.activities { width: 97px; letter-spacing: .45px; }
.top-ff { margin-right: 6px; }
.appname { width: 138px; letter-spacing: .14px; }
.caret { margin-left: 5px; border: 5px solid transparent; border-top-color: #f2f2f2; border-bottom: 0; }
.clock { margin-left: 612px; width: 129px; }
.dot { width: 8px; height: 8px; border-radius: 50%; background: #f2f2f2; margin-left: 13px; }
.tray { position: absolute; right: 0; top: 0; }
.battery { position: absolute; left: 1857px; top: 4px; font-size: 13px; letter-spacing: -.4px; }

.titlebar { height: 36px; flex: none; background: #2c2c2c; border-bottom: 1px solid #1f1f1f; display: flex; align-items: center; justify-content: center; position: relative; color: #fff; }
.wintitle { font-weight: 700; letter-spacing: .18px; }
.controls { position: absolute; right: 0; top: 0; }

.toolbox { height: 144px; flex: none; position: relative; color: #14296b; border-bottom: 1px solid #aaa; }
.elephant { position: absolute; left: 1420px; top: 0; overflow: visible; }
.brand { font-family: Inter, "Liberation Sans", sans-serif; font-weight: 300; }
.menubar { height: 27px; display: flex; align-items: center; padding-left: 11px; }
.menubar u { text-underline-offset: 3px; text-decoration-thickness: 1px; }
.m-file { width: 46px; } .m-edit { width: 48px; } .m-view { width: 56px; } .m-hist { width: 69px; } .m-book { width: 97px; } .m-tool { width: 57px; }
.m-book, .m-tool { letter-spacing: .1px; }

.tabs { height: 41px; display: flex; position: relative; }
.tabs::after { content: ""; flex: 1; order: 2; border-bottom: 1px solid #aaa; }
.tab { width: 41px; height: 41px; display: flex; align-items: center; justify-content: center; padding-right: 2px; border-bottom: 1px solid #aaa; background: linear-gradient(#b8bccf, #b8bccf) right 5px / 1px 32px no-repeat; }
.tab.last { background: none; }
.tab.active { width: 42px; margin-left: -1px; z-index: 1; border: solid #aaa; border-width: 0 1px; background: #fff; box-shadow: inset 0 3px #14296b; }
.newtab { width: 37px; border-bottom: 1px solid #aaa; display: flex; align-items: center; justify-content: center; }
.slab { font-family: "Liberation Serif", serif; font-weight: 700; }

.nav { height: 40px; display: flex; align-items: center; position: relative; background: rgba(255,255,255,.4); }
.urlbar { width: 1555px; margin-right: 1px; height: 32px; border: 1px solid #b5b5b5; border-radius: 4px; background: rgba(255,255,255,.45); box-shadow: 0 1px 4px rgba(0,0,0,.06); display: flex; align-items: center; color: #444; }
.url { letter-spacing: .56px; }
.url b { color: #000; font-weight: 400; }
.urlicons { margin-left: auto; margin-right: -1px; }
.badge, .glyph { font-family: "Noto Sans", sans-serif; }
.bookmarks { height: 35px; display: flex; align-items: center; }
.zoomlevel { width: 38px; letter-spacing: .3px; }
.import { width: 136px; letter-spacing: .14px; }
.started { letter-spacing: .15px; }
.expand { margin-left: auto; }

.page { flex: 1; display: flex; flex-direction: column; align-items: center; padding-top: 32px; color: #24292f; }
h1 { margin: 25px 0 17px; font-size: 24px; line-height: 36px; font-weight: 400; letter-spacing: -.5px; }
.card { width: 308px; height: 159px; margin-top: 1px; border: 1px solid #d8dee4; border-radius: 6px; background: #f6f8fa; padding: 16px; display: flex; flex-direction: column; font-size: 14px; }
.card label { line-height: 18px; height: 29px; }
.input { height: 32px; border: 1px solid #1d55bf; border-radius: 5px; background: #fff6c4; box-shadow: 0 0 0 3px #b5c8eb; padding: 5px 10px; flex: none; }
a { color: #0969da; }
.forgot { font-size: 12px; line-height: 18px; text-align: right; margin: 3px 0 11px; }
.button { height: 32px; background: #218bff; border: 1px solid #1d7fe8; border-radius: 6px; color: #fff; text-align: center; line-height: 29px; flex: none; }
.tip { margin: 14px 0 0; font-size: 12px; line-height: 18px; text-align: center; color: #57606a; }
.links { display: flex; gap: 16px; margin-top: 80px; font-size: 12px; line-height: 18px; color: #57606a; }

.dock { height: 52px; flex: none; display: flex; background: radial-gradient(ellipse 140px 50px at 1670px 26px, #292d2c, transparent), linear-gradient(90deg, #262c39, #252b37 75%, #1d2230); border-top: 1px solid #1b1e26; }
.app { width: 56px; height: 52px; margin-top: -1px; }
.pip { fill: #e95420; }
.grid { margin-left: 16px; }
.vim { font-family: "Liberation Sans", sans-serif; font-weight: 700; font-style: italic; }
.serif { font-family: "Liberation Serif", serif; }
```
